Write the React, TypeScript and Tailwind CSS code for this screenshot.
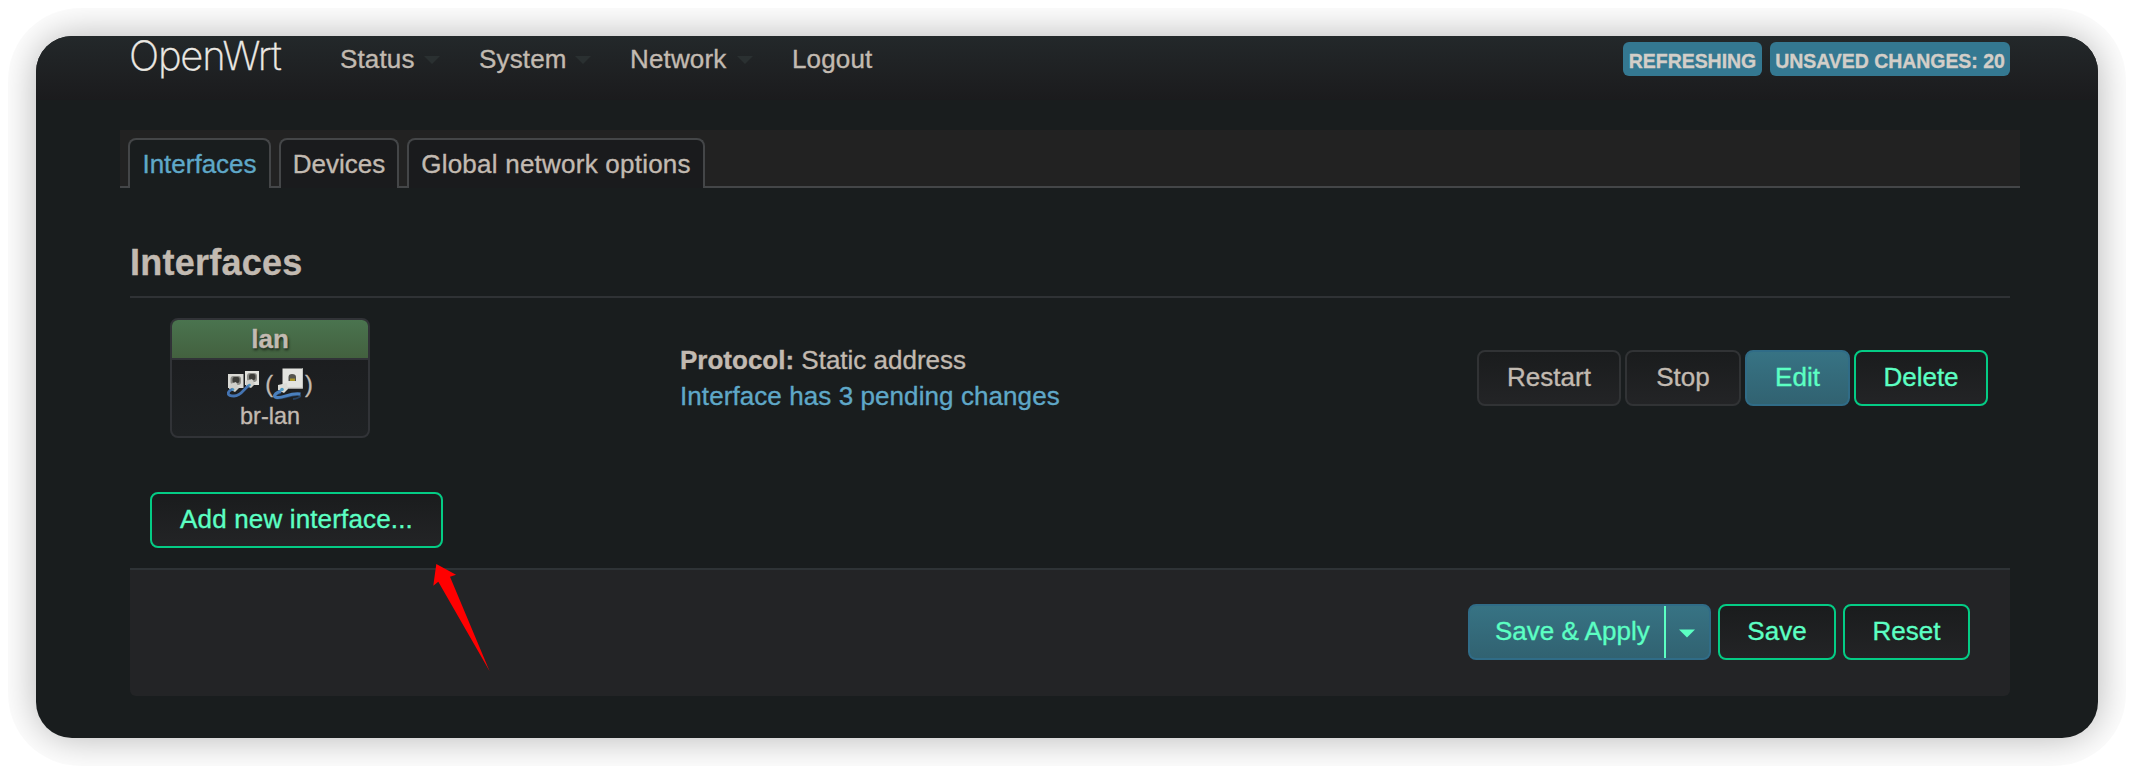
import type { ReactNode } from "react";

function Caret({ className }: { className: string }) {
  return (
    <svg viewBox="0 0 16 8" className={className} fill="currentColor">
      <path d="M0 0H16L8 8Z" />
    </svg>
  );
}

function NavItem({ label, menu = true, className }: { label: string; menu?: boolean; className: string }) {
  return (
    <li className={`flex items-center ${className}`}>
      <a className="leading-[36px]">{label}</a>
      {menu && <Caret className="mt-[2px] mr-[39px] ml-auto h-2 w-4 text-[#2a3031]" />}
    </li>
  );
}

function Badge({ children, className }: { children: ReactNode; className: string }) {
  return (
    <span
      className={`flex h-[34px] items-center justify-center rounded-[6px] bg-[#347891] pt-[3px] text-[19.5px] leading-[30px] font-bold tracking-[-0.05px] whitespace-nowrap text-[#d3cec8] ${className}`}
    >
      {children}
    </span>
  );
}

function Tab({ label, active = false, className }: { label: string; active?: boolean; className: string }) {
  return (
    <li
      className={`h-[50px] rounded-t-[8px] border-2 border-b-0 border-[#444648] text-center leading-[49px] whitespace-nowrap ${
        active ? "bg-[#191d1e] text-[#5fa8c8]" : "bg-[#1a1b1d]"
      } ${className}`}
    >
      {label}
    </li>
  );
}

const buttonTone = {
  plain: "border-[#313335] bg-linear-to-b from-[#1a1c1d] to-[#232426]",
  outline: "border-[#04cc85] bg-linear-to-b from-[#1a1c1d] to-[#232426] text-[#5cffc3]",
  solid: "border-[#306c87] bg-linear-to-b from-[#377384] to-[#316271] text-[#5cffc3]",
};

function Button({
  children,
  tone,
  className,
}: {
  children: ReactNode;
  tone: keyof typeof buttonTone;
  className: string;
}) {
  return (
    <button
      className={`h-[56px] rounded-[8px] border-2 pb-[2px] text-center leading-[50px] whitespace-nowrap ${buttonTone[tone]} ${className}`}
    >
      {children}
    </button>
  );
}

function BridgeIcon() {
  return (
    <svg viewBox="0 0 32 32" className="h-8 w-8">
      <rect x="1" y="6" width="15.500" height="14" fill="#d9d9d4" />
      <rect x="3.500" y="8" width="10.500" height="9" rx="3" fill="#8b8b86" />
      <rect x="5.500" y="9" width="7" height="6" rx="2" fill="#3c3c38" />
      <path d="M3 16L9 14L12 20L8 24L2 21Z" fill="#cfcfca" />
      <rect x="18" y="3" width="14" height="14" fill="#e2e2dd" />
      <rect x="20" y="5" width="10" height="9" rx="3" fill="#8b8b86" />
      <rect x="22" y="6" width="6.500" height="6" rx="2" fill="#3c3c38" />
      <path d="M19 13L25 11L28 16L24 20L19 18Z" fill="#cfcfca" />
      <path d="M6 21C-1 24 0 28 7 28C15 28 16 21 22 17.500" fill="none" stroke="#4474b2" strokeWidth="2.800" />
      <circle cx="6" cy="21.500" r="1.300" fill="#4b94bd" />
      <circle cx="22.500" cy="17" r="1.300" fill="#4b94bd" />
    </svg>
  );
}

function EthernetIcon() {
  return (
    <svg viewBox="0 0 32 32" className="h-8 w-8">
      <path d="M8 25C2 26 0 30 4 30.500C11 31 17 27 24 27C30 27 27 30 20 31" fill="none" stroke="#27415f" strokeWidth="2" />
      <rect x="9.500" y="0.500" width="20.500" height="20" fill="#e3e4e0" />
      <path d="M9.500 20H29.500V0.500" fill="none" stroke="#c3c4c0" />
      <path d="M15.500 13V9Q15.500 6 19 6Q23 6 23 9V13Z" fill="#55554f" />
      <rect x="17" y="10.500" width="5" height="2.500" fill="#a89527" />
      <path d="M5 17L14 15L15 21L11 25L5 22Z" fill="#dadbd6" />
      <path d="M8 23C2 25 -1 29 4 29.500C11 30 17 24.500 27.500 26" fill="none" stroke="#4a80bf" strokeWidth="3" />
      <circle cx="9" cy="21.500" r="1.800" fill="#4e9bc4" />
    </svg>
  );
}

export default function App() {
  return (
    <div className="h-[774px] w-[2134px] overflow-hidden bg-white p-[8px] font-['Liberation_Sans',Arial,sans-serif] text-[26px] text-[#c2bab1] [-webkit-text-stroke:0.35px]">
      <div className="overflow-hidden rounded-[72px] p-[28px]">
        <div className="relative flex h-[702px] w-[2062px] flex-col rounded-[36px] bg-[#191d1e] shadow-[0_0_40px_rgba(0,0,0,0.3)]">
          <header className="flex h-[64px] shrink-0 items-start rounded-t-[36px] bg-linear-to-b from-[#23282a] to-[#1b1b1d] pr-[88px] pl-[93px]">
            <a className="-mt-[4px] w-[211px] font-['Inter',sans-serif] text-[40px] leading-[48px] font-extralight tracking-[-1.200px] text-[#ece9e4]">
              OpenWrt
            </a>
            <ul className="mt-[5px] flex tracking-[0.150px]">
              <NavItem label="Status" className="w-[139px]" />
              <NavItem label="System" className="w-[151px]" />
              <NavItem label="Network" className="w-[162px]" />
              <NavItem label="Logout" menu={false} className="w-[90px]" />
            </ul>
            <div className="mt-[6px] ml-auto flex gap-[8px]">
              <Badge className="w-[139px]">REFRESHING</Badge>
              <Badge className="w-[240px]">UNSAVED CHANGES: 20</Badge>
            </div>
          </header>

          <ul className="mt-[30px] ml-[84px] flex h-[58px] w-[1900px] shrink-0 items-end bg-[#222222]">
            <li className="h-[2px] w-[8px] bg-[#444648]" />
            <Tab label="Interfaces" active className="w-[143px]" />
            <li className="h-[2px] w-[8px] bg-[#444648]" />
            <Tab label="Devices" className="w-[120px]" />
            <li className="h-[2px] w-[8px] bg-[#444648]" />
            <Tab label="Global network options" className="w-[298px] tracking-[0.230px]" />
            <li className="h-[2px] flex-1 bg-[#444648]" />
          </ul>

          <main className="mx-[94px] w-[1880px]">
            <h3 className="mt-[50px] h-[60px] border-b-2 border-[#2f3235] text-[36px] leading-[49px] font-bold tracking-[0.250px]">
              Interfaces
            </h3>

            <div className="mt-[20px] flex h-[120px] items-start pr-[22px] pl-[40px]">
              <div className="h-[120px] w-[200px] overflow-hidden rounded-[8px] border-2 border-[#313337] bg-linear-to-b from-[#1a1b1d] to-[#1f2224] text-center">
                <div className="h-[40px] border-b-2 border-[#313337] bg-linear-to-b from-[#4a744f] to-[#43613f] leading-[38px] font-bold [text-shadow:1px_2px_3px_rgba(0,0,0,0.7)]">
                  lan
                </div>
                <div className="flex h-[42px] items-start justify-center pt-[8px] text-[23.4px] leading-[32px]">
                  <BridgeIcon />
                  <span className="ml-[6px]">(</span>
                  <EthernetIcon />
                  <span>)</span>
                </div>
                <div className="text-[23.4px] leading-[29px]">br-lan</div>
              </div>
              <div className="mt-[24px] ml-[310px] leading-[36px]">
                <div>
                  <strong>Protocol:</strong> Static address
                </div>
                <div className="tracking-[0.080px] text-[#5fa8c8]">Interface has 3 pending changes</div>
              </div>
              <div className="mt-[32px] ml-auto flex gap-[4px]">
                <Button tone="plain" className="w-[144px]">Restart</Button>
                <Button tone="plain" className="w-[116px]">Stop</Button>
                <Button tone="solid" className="w-[105px]">Edit</Button>
                <Button tone="outline" className="w-[134px]">Delete</Button>
              </div>
            </div>

            <Button tone="outline" className="mt-[54px] ml-[20px] block w-[293px] tracking-[0.150px]">
              Add new interface...
            </Button>

            <footer className="mt-[20px] flex h-[128px] items-start justify-end rounded-b-[6px] border-t-2 border-[#2e3336] bg-[#232426] pt-[34px] pr-[40px]">
              <div className="flex h-[56px] w-[243px] rounded-[8px] border-2 border-[#306c87] bg-linear-to-b from-[#377384] to-[#316271] text-[#5cffc3]">
                <button className="w-[196px] border-r-2 border-[#5cffc3] pb-[2px] pl-[25px] text-left leading-[50px] whitespace-nowrap">
                  Save &amp; Apply
                </button>
                <button className="flex flex-1 items-center justify-center pt-[3px] pr-[2px]">
                  <Caret className="h-[9px] w-[16px]" />
                </button>
              </div>
              <Button tone="outline" className="ml-[7px] w-[118px]">Save</Button>
              <Button tone="outline" className="ml-[7px] w-[127px]">Reset</Button>
            </footer>
          </main>

          <svg viewBox="0 0 57 107" className="absolute top-[528px] left-[397px] h-[107px] w-[57px]">
            <path d="M3.300 0L23 10.700L17 12.700L56.500 107L5.300 17.700L0.300 21.700Z" fill="#ff0000" />
          </svg>
        </div>
      </div>
    </div>
  );
}
